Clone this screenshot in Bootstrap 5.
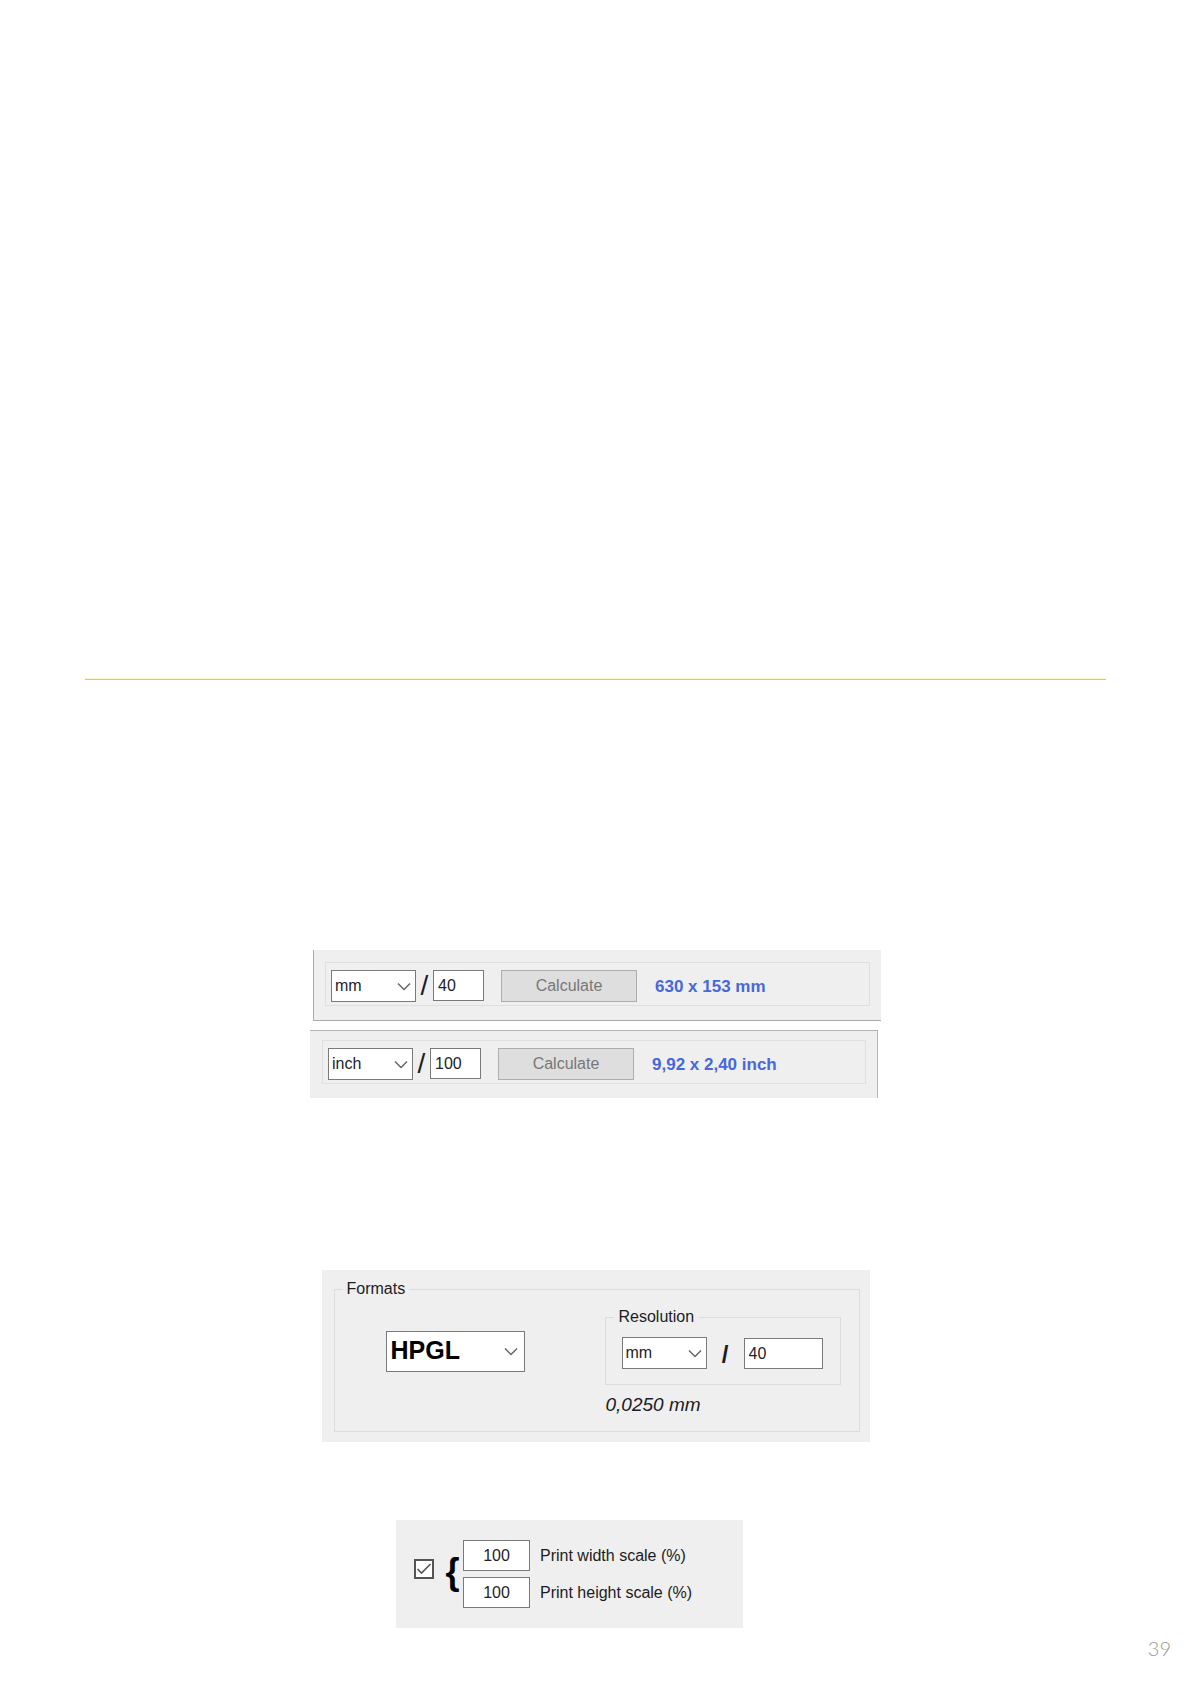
<!DOCTYPE html>
<html lang="en">
<head>
<meta charset="utf-8">
<meta name="viewport" content="width=device-width, initial-scale=1">
<title>Resolution and scale settings</title>
<link href="https://cdn.jsdelivr.net/npm/bootstrap@5.3.0/dist/css/bootstrap.min.css" rel="stylesheet">
<style>
body { font-family: "Liberation Sans", Arial, sans-serif; font-size: 16px; line-height: 20px; color: #1c1c24; background: #fff; }
.manual-page { padding: 679px 85px 0; }
.section-rule { margin: 0; border-top: 1px solid #e3c768; opacity: 1; box-shadow: 0 -1px 0 #fff8c4; }
.panel { background: #efefef; }
.size-figures { width: 571px; max-width: 100%; margin: 270px auto 0; gap: 9px; }
.size-panel { width: 568px; max-width: 100%; }
.size-panel-a { border-left: 1px solid #aaa; border-bottom: 1px solid #aaa; padding: 12px 11px 14px 11px; }
.size-panel-b { border-top: 1px solid #b4b4b4; border-right: 1px solid #b4b4b4; padding: 9px 11px 14px 12px; }
.size-row { border: 1px solid #dfdfdf; padding: 7px 5px 3px; }
.group { border: 1px solid #dcdcdc; margin: 0; padding: 0 8px; min-width: 0; }
.group legend { float: none; width: auto; margin: 0; padding: 0 4px; font-size: 16px; line-height: 20px; }
.field, .field:focus { border: 1px solid #7a7a7a; border-radius: 0; background-color: #fff; color: #22222c; font-size: 16px; line-height: 20px; height: 31px; padding: 0 4px; box-shadow: none; }
.drop, .drop:focus { height: 32px; width: 85px; padding: 0 24px 0 3px; background-position: right 4px center; background-size: 14px 9px;
  background-image: url("data:image/svg+xml,%3Csvg xmlns='http://www.w3.org/2000/svg' viewBox='0 0 14 9'%3E%3Cpath d='M1 1.5l6 6 6-6' fill='none' stroke='%23666' stroke-width='1.5'/%3E%3C/svg%3E"); }
.num { width: 51px; }
.num-wide { width: 79px; }
.num-scale { width: 67px; text-align: center; }
.format-drop, .format-drop:focus { width: 139px; height: 41px; font-size: 25px; line-height: 30px; font-weight: 700; color: #000; padding: 0 24px 4px 4px; background-position: right 6px center; }
.divider { width: 17px; text-align: center; font-size: 28px; line-height: 32px; }
.divider-bold { width: 37px; text-align: center; font-size: 24px; line-height: 28px; font-weight: 700; }
.calc-btn { width: 136px; height: 32px; margin-left: 17px; padding: 0; border: 1px solid #adadad; border-radius: 0; background: #dedede; font-size: 16px; line-height: 20px; }
.calc-btn:disabled { color: #777; background: #dedede; border-color: #adadad; opacity: 1; }
.size-out { margin-left: 18px; color: #4668dc; font-size: 17px; line-height: 34px; height: 32px; font-weight: 700; }
.format-panel { width: 548px; max-width: 100%; margin: 172px auto 0; padding: 9px 10px 10px 12px; }
.format-body { padding: 0 10px 14px 43px; }
.format-pick { padding-top: 32px; }
.resolution { width: 236px; }
.resolution-group { padding: 10px 8px 15px; }
.resolution .group legend { padding: 0 5px; }
.step-out { font-size: 19px; line-height: 24px; font-style: italic; padding: 8px 0 0 1px; }
.scale-wrap { margin-top: 78px; padding-right: 52px; }
.scale-panel { width: 347px; max-width: 100%; padding: 20px 18px; }
.scale-check, .scale-check:checked { width: 20px; height: 20px; margin: 0 0 10px; border: 2px solid #555; border-radius: 0; background-color: #fff; background-size: 16px 16px; }
.scale-check[type=checkbox] { border-radius: 0; }
.scale-check:checked[type=checkbox] { background-image: url("data:image/svg+xml,%3Csvg xmlns='http://www.w3.org/2000/svg' viewBox='0 0 16 16'%3E%3Cpath d='M1.5 8l4 4 9-9' fill='none' stroke='%23555' stroke-width='1.6'/%3E%3C/svg%3E"); }
.brace { width: 29px; text-align: center; padding: 0 0 4px 8px; font-size: 36px; line-height: 36px; font-weight: 700; color: #000; }
.scale-fields { gap: 6px; }
.scale-row { gap: 10px; }
.page-number { font-family: Lato, sans-serif; font-weight: 300; font-size: 20px; line-height: 24px; color: #999; padding: 8px 20px 0 0; text-align: right; }
</style>
</head>
<body>
<main class="manual-page">
  <hr class="section-rule">

  <div class="size-figures d-flex flex-column">
    <section class="panel size-panel size-panel-a align-self-end" aria-label="Size in millimetres">
      <div class="size-row d-flex align-items-start">
        <select class="form-select field drop" aria-label="Unit"><option>mm</option><option>inch</option></select>
        <span class="divider">/</span>
        <input class="form-control field num" type="text" value="40" aria-label="Steps per mm">
        <button class="btn calc-btn" type="button" disabled>Calculate</button>
        <output class="size-out">630 x 153 mm</output>
      </div>
    </section>
    <section class="panel size-panel size-panel-b" aria-label="Size in inches">
      <div class="size-row d-flex align-items-start">
        <select class="form-select field drop" aria-label="Unit"><option>inch</option><option>mm</option></select>
        <span class="divider">/</span>
        <input class="form-control field num" type="text" value="100" aria-label="Steps per inch">
        <button class="btn calc-btn" type="button" disabled>Calculate</button>
        <output class="size-out">9,92 x 2,40 inch</output>
      </div>
    </section>
  </div>

  <section class="panel format-panel">
    <fieldset class="group">
      <legend>Formats</legend>
      <div class="format-body d-flex justify-content-between align-items-start">
        <div class="format-pick">
          <select class="form-select field drop format-drop" aria-label="Format"><option>HPGL</option></select>
        </div>
        <div class="resolution pt-2">
          <fieldset class="group">
            <legend>Resolution</legend>
            <div class="resolution-group d-flex align-items-end">
              <select class="form-select field drop" aria-label="Resolution unit"><option>mm</option><option>inch</option></select>
              <span class="divider-bold">/</span>
              <input class="form-control field num-wide" type="text" value="40" aria-label="Resolution">
            </div>
          </fieldset>
          <output class="step-out d-block">0,0250 mm</output>
        </div>
      </div>
    </fieldset>
  </section>

  <div class="scale-wrap d-flex justify-content-center">
    <section class="panel scale-panel d-flex align-items-center">
      <input class="form-check-input scale-check flex-shrink-0" type="checkbox" checked aria-label="Lock scales together">
      <span class="brace">{</span>
      <div class="scale-fields d-flex flex-column">
        <div class="scale-row d-flex align-items-center">
          <input class="form-control field num-scale" type="text" value="100" id="scaleW">
          <label for="scaleW">Print width scale (%)</label>
        </div>
        <div class="scale-row d-flex align-items-center">
          <input class="form-control field num-scale" type="text" value="100" id="scaleH">
          <label for="scaleH">Print height scale (%)</label>
        </div>
      </div>
    </section>
  </div>
</main>
<footer class="page-number">39</footer>
<script src="https://cdn.jsdelivr.net/npm/bootstrap@5.3.0/dist/js/bootstrap.bundle.min.js"></script>
</body>
</html>
